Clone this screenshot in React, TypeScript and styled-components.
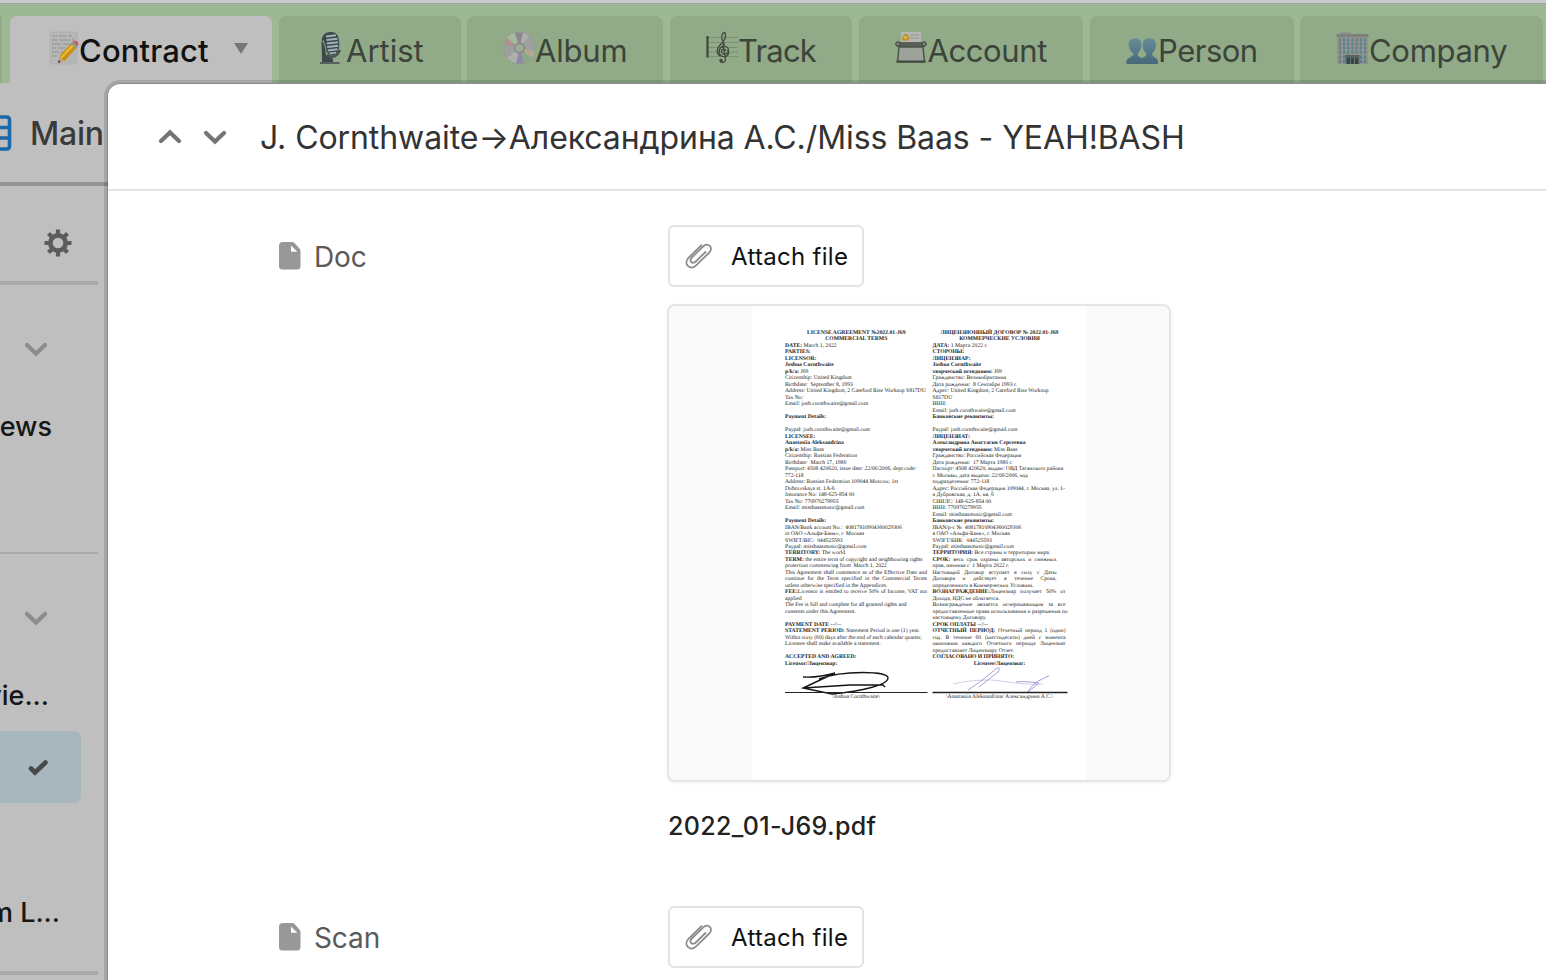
import React from "react";
import styled, { createGlobalStyle } from "styled-components";

const Global = createGlobalStyle`
  * { box-sizing: border-box; }
  body { margin: 0; background: #bfbfbf; overflow: hidden; }
`;

const Page = styled.div`
  position: relative;
  width: 1546px;
  height: 980px;
  overflow: hidden;
  background: #bfbfbf;
  font-family: Inter, "Liberation Sans", sans-serif;
  color: #3a3a3a;
`;

const TabBar = styled.nav`
  display: flex;
  height: 83px;
  padding-top: 12px;
  border-top: 1px solid #a2a2a2;
  background: #9db894;
`;

const WindowEdge = styled.div`
  height: 3px;
  background: #cbcbcb;
`;

const TabBarClip = styled.div`
  height: 83px;
  overflow: hidden;
`;

const TabEdge = styled.div`
  flex: none;
  width: 2px;
  margin-right: 8px;
  background: #91aa88;
  border-top-right-radius: 2px;
`;

const Tab = styled.div<{ $w: number; $pad: number; $active?: boolean; $gap?: number }>`
  flex: none;
  display: flex;
  align-items: flex-start;
  width: ${(p) => p.$w}px;
  margin-right: ${(p) => p.$gap ?? 7}px;
  padding: 15px 0 0 ${(p) => p.$pad}px;
  border-radius: 7px 7px 0 0;
  background: ${(p) => (p.$active ? "#bfbfbf" : "#91aa88")};
  color: ${(p) => (p.$active ? "#111" : "#3d443a")};
`;

const TabIcon = styled.svg`
  flex: none;
  height: 34px;
`;

const TabName = styled.span<{ $ls?: number; $strong?: boolean; $shift?: number }>`
  margin-left: ${(p) => p.$shift ?? -1}px;
  font-size: 31px;
  line-height: 40px;
  font-weight: ${(p) => (p.$strong ? 500 : 400)};
  letter-spacing: ${(p) => p.$ls ?? 0}px;
  white-space: nowrap;
`;

const TabCaret = styled.span`
  width: 0;
  height: 0;
  margin: 12px 0 0 auto;
  border: 7px solid transparent;
  border-top: 11px solid #777;
  border-bottom: 0;
  transform: translateX(-24px);
`;

const Sidebar = styled.aside`
  display: flex;
  flex-direction: column;
  width: 108px;
`;

const ViewBar = styled.div`
  display: flex;
  align-items: center;
  height: 103px;
  border-bottom: 4px solid #929292;
`;

const ViewName = styled.span`
  margin-left: 18px;
  padding-top: 3px;
  font-size: 32px;
  font-weight: 500;
  letter-spacing: -0.2px;
  line-height: 40px;
  color: #3a3a3a;
`;

const Section = styled.section<{ $h: number; $line: number }>`
  width: 98px;
  height: ${(p) => p.$h}px;
  border-bottom: ${(p) => p.$line}px solid #a9a9a9;
`;

const IconLine = styled.div<{ $top: number; $left: number }>`
  display: flex;
  padding: ${(p) => p.$top}px 0 0 ${(p) => p.$left}px;
`;

const SideText = styled.div<{ $top: number; $w: number }>`
  display: flex;
  justify-content: flex-end;
  width: ${(p) => p.$w}px;
  margin-top: ${(p) => p.$top}px;
  overflow: hidden;
  white-space: nowrap;
  font-size: 27px;
  font-weight: 500;
  line-height: 36px;
  color: #161616;
`;

const SelectedView = styled.div`
  display: flex;
  width: 81px;
  height: 72px;
  margin-top: 17px;
  padding: 28px 0 0 28px;
  border-radius: 0 7px 7px 0;
  background: #a7b7bd;
`;

const Dialog = styled.main`
  position: absolute;
  left: 108px;
  top: 84px;
  width: 1460px;
  height: 920px;
  border-top-left-radius: 12px;
  background: #fff;
  box-shadow: 0 0 0 1px rgba(0, 0, 0, 0.16), 0 0 0 4px rgba(0, 0, 0, 0.12);
`;

const DialogHeader = styled.header`
  display: flex;
  align-items: center;
  height: 107px;
  padding: 0 0 0 50px;
  border-bottom: 2px solid #e3e3e3;
`;

const Stepper = styled.div`
  display: flex;
  gap: 21px;
`;

const Title = styled.h1`
  margin: 2px 0 0 33px;
  font-size: 32px;
  font-weight: 400;
  line-height: 44px;
  letter-spacing: -0.08px;
  white-space: nowrap;
  color: #333;
`;

const Field = styled.div<{ $h: number }>`
  display: flex;
  height: ${(p) => p.$h}px;
`;

const Fields = styled.div`
  padding: 34px 0 0 170px;
`;

const FieldLabel = styled.div`
  display: flex;
  align-items: center;
  gap: 13px;
  width: 390px;
  height: 62px;
  font-size: 28px;
  letter-spacing: -0.1px;
  color: #5a5a5a;
`;

const LabelText = styled.span`
  padding-top: 2px;
`;

const AttachButton = styled.button`
  display: flex;
  align-items: center;
  width: 196px;
  height: 62px;
  padding: 0 0 0 15px;
  border: 2px solid #e3e3e3;
  border-radius: 6px;
  background: #fff;
  font-family: inherit;
  font-size: 24px;
  font-weight: 400;
  letter-spacing: 0.3px;
  white-space: nowrap;
  color: #111;
`;

const ButtonText = styled.span`
  margin: 1px 0 0 18px;
`;

const Preview = styled.div`
  display: flex;
  justify-content: center;
  width: 504px;
  height: 478px;
  margin: 17px 0 0 -1.5px;
  border: 2px solid #e6e6e6;
  border-radius: 8px;
  background: #fafafa;
  box-shadow: 0 1px 4px rgba(0, 0, 0, 0.06);
`;

const FileName = styled.div`
  margin-top: 26px;
  font-size: 25px;
  font-weight: 500;
  line-height: 36px;
  letter-spacing: 0.37px;
  color: #222;
`;

const Paper = styled.div`
  width: 334px;
  height: 474px;
  padding: 24px 0 0 33.5px;
  background: #fff;
  color: #1c1c1c;
  font-family: "Liberation Serif", serif;
  font-size: 5.65px;
  line-height: 6.5px;
  text-rendering: geometricPrecision;
`;

const Columns = styled.div`
  display: flex;
  gap: 5px;
`;

const Column = styled.div<{ $w: number }>`
  width: ${(p) => p.$w}px;
`;

const PaperLine = styled.div<{ $just?: number; $center?: boolean }>`
  height: 6.488px;
  white-space: ${(p) => (p.$just ? "normal" : "pre")};
  width: ${(p) => (p.$just ? `${p.$just}px` : "auto")};
  text-align: ${(p) => (p.$center ? "center" : "left")};
  text-align-last: ${(p) => (p.$just ? "justify" : "auto")};
`;

const Signature = styled.div<{ $w: number }>`
  width: ${(p) => p.$w}px;
  margin-top: -1px;
  text-align: center;
`;

const SignSvg = styled.svg`
  display: block;
  height: 28px;
  width: 100%;
  overflow: visible;
`;

type Line = { b?: string; t?: string; j?: number; c?: boolean };

const english: Line[] = [
  { b: "LICENSE AGREEMENT №2022.01-J69", c: true },
  { b: "COMMERCIAL TERMS", c: true },
  { b: "DATE: ", t: "March 1, 2022" },
  { b: "PARTIES:" },
  { b: "LICENSOR:" },
  { b: "Joshua Cornthwaite" },
  { b: "p/k/a: ", t: "J69" },
  { t: "Citizenship: United Kingdom" },
  { t: "Birthdate:  September 8, 1993" },
  { t: "Address: United Kingdom, 2 Gateford Rise Worksop S817DU" },
  { t: "Tax No:" },
  { t: "Email: josh.cornthwaite@gmail.com" },
  {},
  { b: "Payment Details:" },
  {},
  { t: "Paypal: josh.cornthwaite@gmail.com" },
  { b: "LICENSEE:" },
  { b: "Anastasiia Aleksandrina" },
  { b: "p/k/a: ", t: "Miss Baas" },
  { t: "Citizenship: Russian Federation" },
  { t: "Birthdate:  March 17, 1986" },
  { t: "Passport: 4508 420620, issue date: 22/06/2006, dept.code:" },
  { t: "772-118" },
  { t: "Address: Russian Federation 109044 Moscow, 1st" },
  { t: "Dubrovskaya st. 1A-6" },
  { t: "Insurance No: 148-625-854 00" },
  { t: "Tax No: 770970279955" },
  { t: "Email: missbaasmusic@gmail.com" },
  {},
  { b: "Payment Details:" },
  { t: "IBAN/Bank account No.:  40817810904360029306" },
  { t: "in ОАО «Альфа-Банк», г. Москва" },
  { t: "SWIFT/BIC:  044525593" },
  { t: "Paypal: missbaasmusic@gmail.com" },
  { b: "TERRITORY: ", t: "The world." },
  { b: "TERM: ", t: "the entire term of copyright and neighbouring rights" },
  { t: "protection commencing from  March 1, 2022" },
  { t: "This Agreement shall commence as of the Effective Date and", j: 142 },
  { t: "continue for the Term specified in the Commercial Terms", j: 142 },
  { t: "unless otherwise specified in the Appendices." },
  { b: "FEE:", t: "Licensor is entitled to receive 50% of Income, VAT not", j: 142 },
  { t: "applied" },
  { t: "The Fee is full and complete for all granted rights and" },
  { t: "consents under this Agreement." },
  {},
  { b: "PAYMENT DATE ", t: "--//--" },
  { b: "STATEMENT PERIOD: ", t: "Statement Period is one (1) year." },
  { t: "Within sixty (60) days after the end of each calendar quarter," },
  { t: "Licensee shall make available a statement." },
  {},
  { b: "ACCEPTED AND AGREED:" },
  { b: "Licensor/Лицензиар:" },
];

const russian: Line[] = [
  { b: "ЛИЦЕНЗИОННЫЙ ДОГОВОР № 2022.01-J69", c: true },
  { b: "КОММЕРЧЕСКИЕ УСЛОВИЯ", c: true },
  { b: "ДАТА: ", t: "1 Марта 2022 г." },
  { b: "СТОРОНЫ:" },
  { b: "ЛИЦЕНЗИАР:" },
  { b: "Joshua Cornthwaite" },
  { b: "творческий псевдоним: ", t: "J69" },
  { t: "Гражданство: Великобритания" },
  { t: "Дата рождения:  8 Сентября 1993 г." },
  { t: "Адрес: United Kingdom, 2 Gateford Rise Worksop" },
  { t: "S817DU" },
  { t: "ИНН:" },
  { t: "Email: josh.cornthwaite@gmail.com" },
  { b: "Банковские реквизиты:" },
  {},
  { t: "Paypal: josh.cornthwaite@gmail.com" },
  { b: "ЛИЦЕНЗИАТ:" },
  { b: "Александрина Анастасия Сергеевна" },
  { b: "творческий псевдоним: ", t: "Miss Baas" },
  { t: "Гражданство: Российская Федерация" },
  { t: "Дата рождения:  17 Марта 1986 г." },
  { t: "Паспорт: 4508 420620, выдан: ОВД Таганского района" },
  { t: "г. Москвы, дата выдачи: 22/06/2006, код" },
  { t: "подразделения: 772-118" },
  { t: "Адрес: Российская Федерация 109044, г. Москва, ул. 1-" },
  { t: "я Дубровская, д. 1А, кв. 6" },
  { t: "СНИЛС: 148-625-854 00" },
  { t: "ИНН: 770970279955" },
  { t: "Email: missbaasmusic@gmail.com" },
  { b: "Банковские реквизиты:" },
  { t: "IBAN/р-с №  40817810904360029306" },
  { t: "в ОАО «Альфа-Банк», г. Москва" },
  { t: "SWIFT/БИК:  044525593" },
  { t: "Paypal: missbaasmusic@gmail.com" },
  { b: "ТЕРРИТОРИЯ: ", t: "Все страны и территории мира." },
  { b: "СРОК: ", t: "весь срок охраны авторских и смежных", j: 124 },
  { t: "прав, начиная с  1 Марта 2022 г." },
  { t: "Настоящий Договор вступает в силу с Даты", j: 124 },
  { t: "Договора и действует в течение Срока,", j: 124 },
  { t: "определенного в Коммерческих Условиях." },
  { b: "ВОЗНАГРАЖДЕНИЕ:", t: "Лицензиар получает 50% от", j: 133 },
  { t: "Дохода, НДС не облагается." },
  { t: "Вознаграждение является исчерпывающим за все", j: 133 },
  { t: "предоставленные права использования и разрешения по" },
  { t: "настоящему Договору." },
  { b: "СРОК ОПЛАТЫ ", t: "--//--" },
  { b: "ОТЧЕТНЫЙ ПЕРИОД: ", t: "Отчетный период 1 (один)", j: 133 },
  { t: "год. В течение 60 (шестидесяти) дней с момента", j: 133 },
  { t: "окончания каждого Отчетного периода Лицензиат", j: 133 },
  { t: "предоставляет Лицензиару Отчет." },
  { b: "СОГЛАСОВАНО И ПРИНЯТО:" },
  { b: "Licensee/Лицензиат:", c: true },
];

const renderLines = (lines: Line[]) =>
  lines.map((l, k) => (
    <PaperLine key={k} $just={l.j} $center={l.c}>
      {l.b && <b>{l.b}</b>}
      {l.t}
    </PaperLine>
  ));

const MemoIcon = () => (
  <TabIcon width="30" viewBox="0 0 30 34">
    <rect x="1" y="1" width="27" height="32" rx="1" fill="#b6b6b6" stroke="#acacac" strokeWidth=".6" />
    <path d="M4 5h4m2 0h8m2 0h3M3 9h6m2 0h10m2 0h2M3 13h9m2 0h9M3 17h4m2 0h7M3 21h7m2 0h2M3 25h5" stroke="#858585" strokeWidth="1.1" strokeDasharray="2 .7" />
    <path d="M9 32l2-8 5 5.500z" fill="#c9a36e" />
    <path d="M9 32l.8-3 1.900 2z" fill="#333" />
    <path d="M10.500 25L22 12.500l5 5L15.500 30z" fill="#c8920f" />
    <path d="M12.300 26.500L23.800 14.500" stroke="#e5b93c" strokeWidth="2.200" />
    <path d="M22 12.500l2-2 5 5-2 2z" fill="#8e9696" />
    <path d="M24 10.700c1.500-1.500 3.500-1 4.800.3 1 1.100 1.100 2.700-.2 4.300z" fill="#c4605f" />
  </TabIcon>
);

const MicIcon = () => (
  <TabIcon width="30" viewBox="0 0 30 34">
    <path d="M4.500 11l3 1.500L9 24l7 4v3.500H5V27z" fill="#3f4748" />
    <path d="M10 24c6 4 11 1 13-5" fill="none" stroke="#4a5253" strokeWidth="2.200" />
    <path d="M3 31h19.500v2H3z" fill="#566061" />
    <path d="M4.800 9C5 3.500 9.500.5 14.500 1c5 .4 7 3.500 7.500 8.500.7 6 .6 12-4.500 14.500-4 2-7.500-1-9-6.500C7.700 14.500 4.700 13 4.800 9z" fill="#3d484b" />
    <path d="M9 5.500l10-1.300M9.500 9l11-1.300M9.800 12.500l11.200-1.300M10.200 16l11-1.300M10.800 19.500l9.800-1.300M12.500 22.500l6.500-.9" stroke="#9db3b8" strokeWidth="1.900" />
    <path d="M6 9l3 9" stroke="#76878b" strokeWidth="1.500" />
  </TabIcon>
);

const DiscIcon = () => (
  <TabIcon width="33" viewBox="0 0 33 34">
    <circle cx="16.500" cy="17" r="15.800" fill="#9ca19f" stroke="#8d9691" strokeWidth=".6" />
    <path d="M16.500 17L4 7a16 16 0 018-5z" fill="#a6bb9e" />
    <path d="M16.500 17L12 2a16 16 0 018 0z" fill="#8f878f" />
    <path d="M16.500 17L20 2a16 16 0 016 3z" fill="#b0b0b0" />
    <path d="M16.500 17L1 14a16 16 0 013-7z" fill="#ab948c" />
    <path d="M16.500 17L29 27a16 16 0 01-8 5z" fill="#8aa989" />
    <path d="M16.500 17L21 32a16 16 0 01-8 0z" fill="#9089a5" />
    <path d="M16.500 17L32 20a16 16 0 01-3 7z" fill="#b5a791" />
    <path d="M16.500 17L13 32a16 16 0 01-9-5z" fill="#adb0ad" />
    <circle cx="16.500" cy="17" r="5.500" fill="#858b85" />
    <circle cx="16.500" cy="17" r="3.300" fill="#96ad8d" stroke="#aab0aa" />
  </TabIcon>
);

const ScoreIcon = () => (
  <TabIcon width="34" viewBox="0 0 34 34">
    <path d="M2 6.500h31M2 11.500h31M2 16.500h31M2 21h31M2 25.500h31" stroke="#788f72" strokeWidth=".9" />
    <path d="M2.500 5v21.500" stroke="#3f493c" strokeWidth="2.200" />
    <path d="M20.500 20c0-2.500-4-2.500-4 .5 0 4 7 3.500 7-1 0-5-7-5.500-9-1-1.600 5 2 8 6 7 3-.6 4-4 2-6.500M19.500 14L17 8C15.500 4 19 0 20 2c2 4-1 8-4 11-4 4-5.500 9-1 12M18 13l2.500 15c.6 3-4 4.500-5 2.500" fill="none" stroke="#3f493c" strokeWidth="1.300" />
    <circle cx="16" cy="29.500" r="1.700" fill="#3f493c" />
  </TabIcon>
);

const CardIndexIcon = () => (
  <TabIcon width="32" viewBox="0 0 32 34">
    <path d="M6 1h20v12H6z" fill="#b5b8b4" />
    <path d="M15 4h9M15 7h9" stroke="#90958e" />
    <path d="M7 9.500c0-4 1-5.500 4-7 2 1 4 4 3 7z" fill="#be922e" />
    <circle cx="10.500" cy="6.500" r="1.300" fill="#e0c270" />
    <path d="M2 11h28v5H2z" fill="#596059" />
    <path d="M4 16h24l1.500 15h-27z" fill="#9ca29a" stroke="#4b544a" strokeWidth="1.500" />
    <circle cx="3" cy="13" r="2.300" fill="#777f76" stroke="#394039" />
    <circle cx="29" cy="13" r="2.300" fill="#777f76" stroke="#394039" />
    <path d="M1.500 30.500h29" stroke="#424942" strokeWidth="2" />
  </TabIcon>
);

const PeopleIcon = () => (
  <TabIcon width="32" viewBox="0 0 32 34">
    <defs>
      <linearGradient id="people" x1="0" y1="0" x2="0" y2="1">
        <stop offset="0" stopColor="#668d96" />
        <stop offset="1" stopColor="#48677b" />
      </linearGradient>
    </defs>
    <path d="M.5 33v-3c.5-4 7-3.500 7-7.500C3.500 20 2 15 3 11 4.500 6 13.500 6 15 11c1 4 0 8.500-3.500 11.500 0 3 3 3.500 4.500 4.500 1.500-1 4.500-1.500 4.500-4.500C17 19.500 16 15 17 11c1.500-5 11-5 12.500 0 1 4 0 9-3.500 11.500 0 4 5.500 3.500 6 7.500v3z" fill="url(#people)" />
  </TabIcon>
);

const OfficeIcon = () => (
  <TabIcon width="33" viewBox="0 0 33 34">
    <path d="M4 1h11v3H4z" fill="#8e948d" />
    <path d="M1 3.500h31V33H1z" fill="#90938c" />
    <path d="M.5 3h32v3H.5z" fill="#7d827a" />
    <path d="M4 7.500v17m4-17v17m4.200-17v17m4.200-17v17m4.200-17v17m4.200-17v17m4.200-17v17M4 25v7m4-7v7m17-7v7m4-7v7" stroke="#55818f" strokeWidth="2" strokeDasharray="2.900 1.200" />
    <path d="M9.500 24h14v9h-14z" fill="#5b625d" />
    <path d="M11 27h11v6H11z" fill="#34484a" />
    <path d="M14.500 27v6m4-6v6" stroke="#6f7a74" />
  </TabIcon>
);

const GridIcon = () => (
  <svg width="12" height="36" viewBox="0 0 12 36">
    <path d="M0 2h6.500Q9.500 2 9.500 5v26q0 3-3 3H0M0 12.500h9M0 23h9" fill="none" stroke="#1b68a8" strokeWidth="3.600" />
  </svg>
);

const GearIcon = () => (
  <svg width="28" height="28" viewBox="0 0 28 28">
    <g stroke="#5c5c5c" strokeWidth="4.200">
      <path d="M14 .5v27M.5 14h27M4.500 4.500l19 19M23.500 4.500l-19 19" />
    </g>
    <circle cx="14" cy="14" r="10" fill="#5c5c5c" />
    <circle cx="14" cy="14" r="5.300" fill="#bfbfbf" />
  </svg>
);

const Chevron = ({ up, color }: { up?: boolean; color: string }) => (
  <svg width="24" height="16" viewBox="0 0 24 16">
    <path d={up ? "M3 12l9-8.500 9 8.500" : "M3 4l9 8.500L21 4"} fill="none" stroke={color} strokeWidth="4.200" strokeLinecap="round" />
  </svg>
);

const CheckIcon = () => (
  <svg width="20" height="18" viewBox="0 0 20 18">
    <path d="M3 9.500l4 4L17.500 3.500" fill="none" stroke="#4a4a4a" strokeWidth="4.600" strokeLinecap="round" />
  </svg>
);

const FileIcon = () => (
  <svg width="23" height="28" viewBox="0 0 23 28">
    <path d="M5 0h9.500Q15.500 0 16.500 1l5 5.500q1 1 1 2.500V24q0 3.500-3.500 3.500H4.500Q1 27.500 1 24V3.500Q1 0 5 0z" fill="#989898" />
    <path d="M13 3.500v6.300h6.300z" fill="#fff" />
  </svg>
);

const ClipIcon = () => (
  <svg width="28" height="28" viewBox="0 0 28 28">
    <path
      d="M16.500 3.200L3.700 15.600c-2.800 2.700-2.900 6.100-.8 8.300 2.300 2.200 5.500 2 8.200-.6L24.300 10.500c2.100-2.100 2.200-4.900.5-6.600-1.800-1.800-4.500-1.700-6.600.4L6.800 15.500c-1.600 1.600-1.600 3.400-.5 4.500s3 1 4.500-.5L20.500 10"
      fill="none"
      stroke="#8d8d8d"
      strokeWidth="1.800"
      strokeLinecap="round"
    />
  </svg>
);

const Attach = () => (
  <AttachButton>
    <ClipIcon />
    <ButtonText>Attach file</ButtonText>
  </AttachButton>
);

export default function App() {
  return (
    <Page>
      <Global />
      <TabBarClip>
        <WindowEdge />
        <TabBar>
          <TabEdge />
          <Tab $w={262} $pad={39} $active>
            <MemoIcon />
            <TabName $strong $ls={0.15} $shift={0}>Contract</TabName>
            <TabCaret />
          </Tab>
          <Tab $w={182} $pad={38} $gap={6}>
            <MicIcon />
            <TabName>Artist</TabName>
          </Tab>
          <Tab $w={196} $pad={36}>
            <DiscIcon />
            <TabName $ls={-0.2}>Album</TabName>
          </Tab>
          <Tab $w={182} $pad={35}>
            <ScoreIcon />
            <TabName $ls={-0.8}>Track</TabName>
          </Tab>
          <Tab $w={224} $pad={36}>
            <CardIndexIcon />
            <TabName $ls={-0.4} $shift={0.5}>Account</TabName>
          </Tab>
          <Tab $w={204} $pad={36} $gap={6}>
            <PeopleIcon />
            <TabName $ls={-0.5} $shift={0}>Person</TabName>
          </Tab>
          <Tab $w={243} $pad={36}>
            <OfficeIcon />
            <TabName $ls={-0.3} $shift={0}>Company</TabName>
          </Tab>
        </TabBar>
      </TabBarClip>
      <Sidebar>
        <ViewBar>
          <GridIcon />
          <ViewName>Main</ViewName>
        </ViewBar>
        <Section $h={99} $line={4}>
          <IconLine $top={43} $left={44}>
            <GearIcon />
          </IconLine>
        </Section>
        <Section $h={269} $line={2}>
          <IconLine $top={56} $left={24}>
            <Chevron color="#8c8c8c" />
          </IconLine>
          <SideText $top={52} $w={52}>ews</SideText>
        </Section>
        <Section $h={421} $line={4}>
          <IconLine $top={56} $left={24}>
            <Chevron color="#8c8c8c" />
          </IconLine>
          <SideText $top={52} $w={49}>vie...</SideText>
          <SelectedView>
            <CheckIcon />
          </SelectedView>
          <SideText $top={92} $w={60}>m L...</SideText>
        </Section>
      </Sidebar>
      <Dialog>
        <DialogHeader>
          <Stepper>
            <Chevron up color="#757575" />
            <Chevron color="#757575" />
          </Stepper>
          <Title>J. Cornthwaite→Александрина А.С./Miss Baas - YEAH!BASH</Title>
        </DialogHeader>
        <Fields>
          <Field $h={681}>
            <FieldLabel>
              <FileIcon />
              <LabelText>Doc</LabelText>
            </FieldLabel>
            <div>
              <Attach />
              <Preview>
                <Paper>
                  <Columns>
                    <Column $w={142.5}>
                      {renderLines(english)}
                      <Signature $w={142}>
                        <SignSvg viewBox="0 0 142 28" preserveAspectRatio="none">
                          <path d="M18 11c10 .5 22-1 32-4L18 22l29 6c30-3 56-9 56-16 0-7-45-8-69 1M18 22l47-3h33l2 2" fill="none" stroke="#151515" strokeWidth="1.400" />
                          <path d="M0 26.500h142.500" stroke="#222" strokeWidth="1.200" />
                        </SignSvg>
                        \Joshua Cornthwaite\
                      </Signature>
                    </Column>
                    <Column $w={134}>
                      {renderLines(russian)}
                      <Signature $w={134}>
                        <SignSvg viewBox="0 0 134 28" preserveAspectRatio="none">
                          <path d="M20 18c12-3 24-4 36-4s28 5 54 4" fill="none" stroke="#c5c2e2" strokeWidth=".8" />
                          <path d="M35 24C46 17 57 8 64 2c3-1 3 1 1 4L46 21M83 16c8-1 15 0 23 1l-11 9c2-6 12-13 21-16" fill="none" stroke="#9a94cf" strokeWidth=".9" />
                          <path d="M-.5 26.500h135" stroke="#222" strokeWidth="1.500" />
                        </SignSvg>
                        \Anastasiia Aleksandrina/ Александрина А.С.\
                      </Signature>
                    </Column>
                  </Columns>
                </Paper>
              </Preview>
              <FileName>2022_01-J69.pdf</FileName>
            </div>
          </Field>
          <Field $h={62}>
            <FieldLabel>
              <FileIcon />
              <LabelText>Scan</LabelText>
            </FieldLabel>
            <Attach />
          </Field>
        </Fields>
      </Dialog>
    </Page>
  );
}
